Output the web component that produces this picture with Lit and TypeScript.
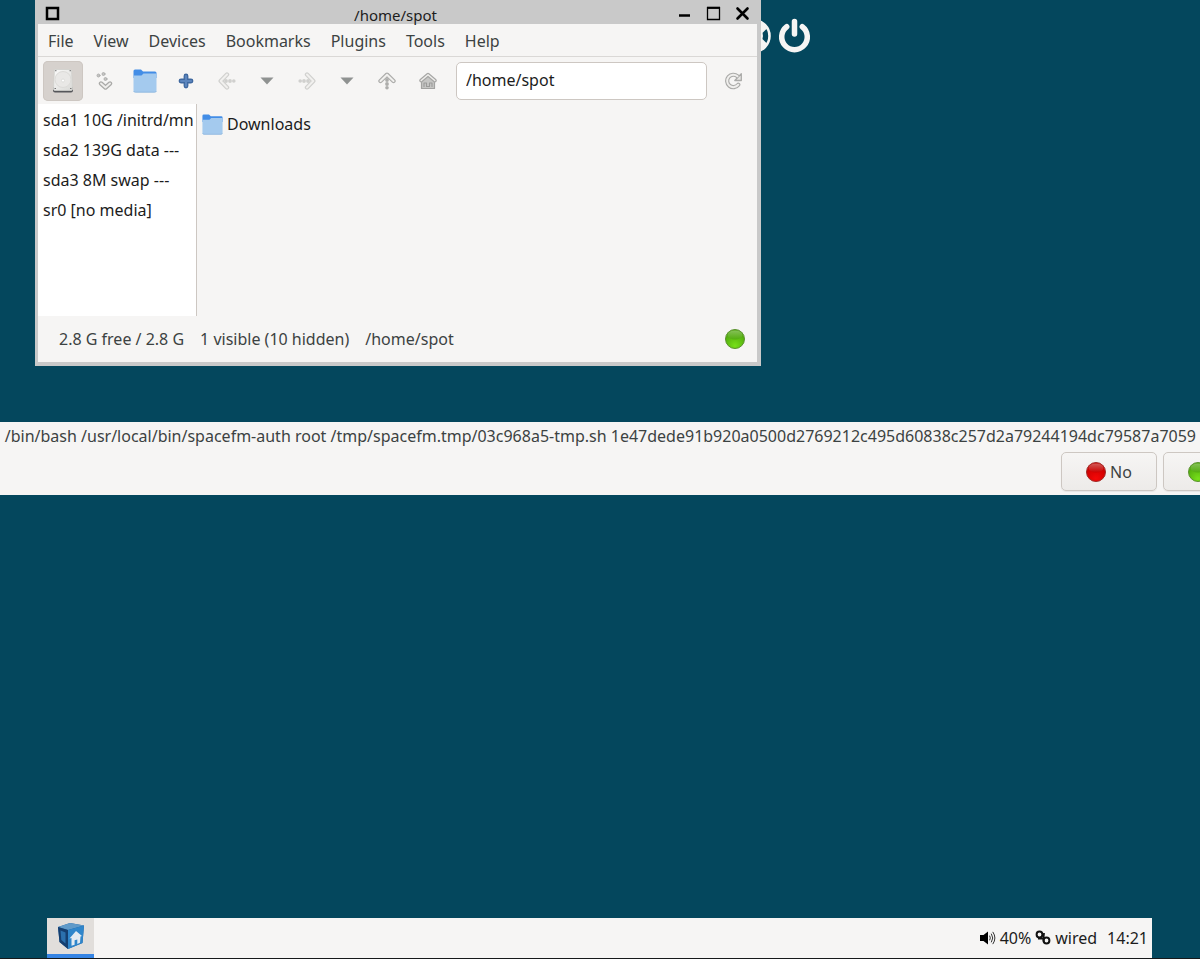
import { LitElement, html, css, svg } from "lit";
import { customElement, property } from "lit/decorators.js";

const drive = svg`<svg width="22" height="26" viewBox="0 0 22 26">
  <defs><linearGradient id="d" x1="0" y1="0" x2="1" y2="1"><stop offset="0" stop-color="#fbfbfa"/><stop offset="1" stop-color="#d9d9d6"/></linearGradient></defs>
  <path d="M1.500 19h19l.5 3.500q0 2-2 2H3q-2 0-2-2z" fill="#55565a"/>
  <path d="M3.500 1.500h15q1 0 1.100 1l.9 18.500q0 1.500-1.500 1.500H3q-1.500 0-1.500-1.500L2.400 2.500q.1-1 1.100-1z" fill="url(#d)" stroke="#cfcfcc" stroke-width=".8"/>
  <circle cx="11" cy="11.500" r="8" fill="#e9e8e6" stroke="#dcdbd8"/>
  <circle cx="11" cy="12.500" r="1.500" fill="#fff" stroke="#d2d1ce" stroke-width=".6"/>
  <path d="M3 2.700h1.500M17.500 2.700H19M2.500 20.500H4M18 20.500h1.500" stroke="#777" stroke-width="1"/>
</svg>`;

const folder = svg`<svg width="24" height="24" viewBox="0 0 24 24">
  <path d="M.5 9V2Q.5.500 2 .500h6L10 2.500h12q1.500 0 1.500 1.500V9z" fill="#438de6"/>
  <path d="M.5 6.500h8L10.500 4.500h13v17q0 1.500-1.500 1.500H2Q.5 23 .5 21.500z" fill="#a4caee"/>
  <path d="M.7 22q.3 1.200 1.500 1.200h19.600q1.200 0 1.500-1.200" fill="none" stroke="#8fb8e0"/>
</svg>`;

const plus = svg`<svg width="16" height="16" viewBox="0 0 16 16">
  <path d="M8 3v10M3 8h10" stroke="#3f689f" stroke-width="4.800" stroke-linecap="round"/>
  <path d="M8 3v10M3 8h10" stroke="#5c85bd" stroke-width="2.200" stroke-linecap="round"/>
</svg>`;

const tree = svg`<svg width="18" height="20" viewBox="0 0 18 20" fill="none" stroke-linecap="round" stroke-linejoin="round">
  <path d="M6 12.500l4.500 4 4.500-4" stroke="#a9a9a7" stroke-width="4.400"/>
  <path d="M6 12.500l4.500 4 4.500-4" stroke="#eeedeb" stroke-width="1.900"/>
  <g fill="#c4c4c2" stroke="#adadab" stroke-width=".9"><circle cx="3.500" cy="4.500" r="1.500"/><circle cx="8.500" cy="3" r="1.500"/><circle cx="10.500" cy="8" r="1.500"/></g>
</svg>`;

const arrow = (turn: number, dark: boolean) => {
  const edge = dark ? "#adadab" : "#d0d0ce";
  return svg`<svg width="18" height="18" viewBox="0 0 18 18" fill="none" stroke-linecap="round" stroke-linejoin="round">
  <g transform="rotate(${turn} 9 9)">
    <path d="M9 2.500L2.700 9 9 15.500" stroke="${edge}" stroke-width="4.400"/>
    <path d="M9 2.500L2.700 9 9 15.500" stroke="#f1f0ee" stroke-width="2"/>
    <g fill="${edge}"><circle cx="8" cy="9" r="1.900"/><circle cx="12" cy="9" r="1.900"/><circle cx="15.800" cy="9" r="1.800"/></g>
  </g></svg>`;
};

const caret = svg`<svg width="14" height="8" viewBox="0 0 14 8"><path d="M.5.5h13L7 7.500z" fill="#8f9291"/></svg>`;

const home = svg`<svg width="18" height="18" viewBox="0 0 18 18" fill="none" stroke-linejoin="round" stroke-linecap="round">
  <path d="M2.500 9v7.500h13V9L9 3.500z" fill="#c6c6c4" stroke="#a3a3a1" stroke-width="1.200"/>
  <path d="M2.200 8.500L9 2.800l6.800 5.700" stroke="#a6a6a4" stroke-width="3.800"/>
  <path d="M2.200 8.500L9 2.800l6.800 5.700" stroke="#efeeec" stroke-width="1.500"/>
  <path d="M5 14.500v-3.500h2.500v3.500h3v-3.500H13v3.500" stroke="#9b9b99" stroke-width="1.100"/>
</svg>`;

const reload = svg`<svg width="18" height="18" viewBox="0 0 18 18" fill="none" stroke-linejoin="round" stroke-linecap="round">
  <path d="M13.300 12.700A6.200 6.200 0 1 1 12.500 4.300" stroke="#aaaaa8" stroke-width="4.200"/>
  <path d="M16.300 1.800v6.700H9.800z" fill="#e8e7e5" stroke="#aaaaa8" stroke-width="1.300"/>
  <path d="M13.300 12.700A6.200 6.200 0 1 1 12.500 4.300" stroke="#f0efed" stroke-width="2"/>
</svg>`;

const houseCube = svg`<svg width="28" height="28" viewBox="0 0 28 28">
  <path d="M1 5L13 1l14 2.500L25.500 21 11 27 2.500 20z" fill="#1f5f9f"/>
  <path d="M1 5L13 1l14 2.500L11 8z" fill="#5f9ac9"/>
  <path d="M1 5l10 3v19l-8.500-7z" fill="#153f70"/>
  <path d="M11 8l16-4.500L25.500 21 11 27z" fill="#2f86cb"/>
  <path d="M3.500 8.500L8.500 10.500v11L4.300 18z" fill="#2b70ad"/>
  <path d="M12.500 16.500L19 9l6 5-1.500.6-.5 6.200-2.700 1.100v-4.400l-2.700.8v4.400l-3.100 1.100v-7.800z" fill="#e3ebf2"/>
</svg>`;

const speaker = svg`<svg width="16" height="14" viewBox="0 0 16 14" fill="none" stroke="#333" stroke-linecap="round">
  <path d="M0 4h3.500L8 .500v13L3.500 10H0z" fill="#000" stroke="none"/>
  <path d="M9.800 5q1.200 2 0 4M11.500 3q2.700 4 0 8M13 1.200q4 5.800 0 11.600" stroke-width="1"/>
</svg>`;

const chain = svg`<svg width="16" height="16" viewBox="0 0 16 16" fill="none" stroke="#111" stroke-width="2">
  <circle cx="4.500" cy="4.500" r="2.900"/><circle cx="11.500" cy="10.500" r="2.900"/><path d="M3 8.500L8.500 8.500 9 3M8.500 8.500v3" stroke-width="1.800"/>
</svg>`;

@customElement("status-light")
export class StatusLight extends LitElement {
  @property() tone = "green";
  static styles = css`
    :host { display: block; flex: none; width: 20px; height: 20px; }
    svg { display: block; }
  `;
  render() {
    const [top, mid, low, edge] = this.tone === "red"
      ? ["#d4706c", "#c80000", "#f50808", "#a02c28"]
      : ["#93c76a", "#4fa80c", "#77e01a", "#5b9130"];
    return html`<svg width="20" height="20" viewBox="0 0 20 20" aria-hidden="true">
      <defs>
        <radialGradient id="b" cx=".5" cy=".85" r=".7"><stop offset="0" stop-color=${low}></stop><stop offset="1" stop-color=${mid}></stop></radialGradient>
        <linearGradient id="t" x1="0" y1="0" x2="0" y2="1"><stop offset="0" stop-color=${top}></stop><stop offset="1" stop-color=${mid}></stop></linearGradient>
      </defs>
      <circle cx="10" cy="10" r="9.500" fill="url(#b)" stroke=${edge}></circle>
      <ellipse cx="10" cy="6" rx="7.500" ry="4.500" fill="url(#t)" opacity=".8"></ellipse>
    </svg>`;
  }
}

@customElement("file-manager")
export class FileManager extends LitElement {
  static styles = css`
    :host { display: block; box-sizing: border-box; border: solid #c9c9c9; border-width: 0 4px 4px 3px; background: #f6f5f4; color: #3c4242; }
    button, input { font: inherit; color: inherit; border: 0; margin: 0; padding: 0; background: none; }
    svg { display: block; flex: none; }
    .title { display: flex; align-items: center; height: 24px; background: #c9c9c9; padding: 0 7px; color: #1c1c1c; gap: 14px; }
    .title h1 { flex: 1; margin: 0; padding: 5px 0 0 54px; font-size: 15px; line-height: 20px; font-weight: 400; text-align: center; }
    .title button { width: 15px; height: 15px; margin-top: 3px; }
    .menu { box-sizing: border-box; display: flex; height: 33px; align-items: center; border-bottom: 1px solid #dad8d6; padding: 2px 0 0 10px; gap: 20px; }
    .tools { display: flex; align-items: center; height: 47px; padding: 0 3px 0 5px; gap: 1px; }
    .tool { display: flex; flex: none; align-items: center; justify-content: center; width: 40px; height: 40px; border-radius: 5px; }
    .drop { width: 38px; }
    .on { background: #d6d1cd; box-shadow: inset 0 0 0 1px #cdc7c2; }
    .path { flex: 1; min-width: 0; box-sizing: border-box; height: 38px; margin: 0 6px 0 7px; border: 1px solid #cdc7c2; border-radius: 5px; background: #fff; color: #1c1c1c; padding: 0 9px 2px; }
    .body { display: flex; height: 212px; color: #1c1c1c; }
    .side { box-sizing: border-box; width: 159px; margin: 0; padding: 1px 0 0 5px; list-style: none; background: #fff; border-right: 1px solid #cdc7c2; overflow: hidden; white-space: nowrap; }
    .side li { height: 30px; line-height: 30px; }
    .files { flex: 1; margin: 0; padding: 7px 5px; list-style: none; }
    .files li { display: flex; align-items: center; gap: 4px; line-height: 26px; }
    .files svg { width: 21px; height: 21px; }
    .status { display: flex; align-items: center; height: 46px; padding: 0 12px 0 21px; gap: 16px; }
    .status status-light { margin-left: auto; }
  `;
  menus = ["File", "View", "Devices", "Bookmarks", "Plugins", "Tools", "Help"];
  devices = ["sda1 10G /initrd/mn", "sda2 139G data ---", "sda3 8M swap ---", "sr0 [no media]"];
  tools = [
    { name: "Devices", icon: drive, cls: "tool on" },
    { name: "Tree", icon: tree, cls: "tool" },
    { name: "New folder", icon: folder, cls: "tool" },
    { name: "New tab", icon: plus, cls: "tool" },
    { name: "Back", icon: arrow(0, false), cls: "tool" },
    { name: "Back history", icon: caret, cls: "tool drop" },
    { name: "Forward", icon: arrow(180, false), cls: "tool" },
    { name: "Forward history", icon: caret, cls: "tool drop" },
    { name: "Up", icon: arrow(90, true), cls: "tool" },
    { name: "Home", icon: home, cls: "tool" },
  ];
  render() {
    return html`
      <header class="title">
        <button aria-label="Window menu"><svg width="15" height="15" viewBox="0 0 15 15"><rect x="2" y="2" width="11" height="11" fill="none" stroke="#000" stroke-width="2.500"></rect></svg></button>
        <h1>/home/spot</h1>
        <button aria-label="Minimize"><svg width="15" height="15" viewBox="0 0 15 15"><path d="M2 9.500h11" stroke="#000" stroke-width="2.500"></path></svg></button>
        <button aria-label="Maximize"><svg width="15" height="15" viewBox="0 0 15 15"><path d="M1.500 1v12.500h12V1M1 2h13" fill="none" stroke="#000" stroke-width="1.300"></path><path d="M1 1.700h13" stroke="#000" stroke-width="2"></path></svg></button>
        <button aria-label="Close"><svg width="15" height="15" viewBox="0 0 15 15"><path d="M2.500 2.500l10 10M12.500 2.500l-10 10" stroke="#000" stroke-width="2.600" stroke-linecap="round"></path></svg></button>
      </header>
      <nav class="menu">${this.menus.map((m) => html`<button>${m}</button>`)}</nav>
      <div class="tools">
        ${this.tools.map((t) => html`<button class=${t.cls} aria-label=${t.name}>${t.icon}</button>`)}
        <input class="path" aria-label="Path" .value=${"/home/spot"} />
        <button class="tool" aria-label="Reload">${reload}</button>
      </div>
      <div class="body">
        <ul class="side">${this.devices.map((d) => html`<li>${d}</li>`)}</ul>
        <ul class="files"><li>${folder}<span>Downloads</span></li></ul>
      </div>
      <footer class="status">
        <span>2.8 G free / 2.8 G</span><span>1 visible (10 hidden)</span><span>/home/spot</span>
        <status-light></status-light>
      </footer>`;
  }
}

@customElement("app-root")
export class AppRoot extends LitElement {
  static styles = css`
    :host { display: block; position: relative; box-sizing: border-box; height: 100vh; overflow: hidden; background: #04475d; border-bottom: 1px solid #16191a; font: 16px/22px "Noto Sans", sans-serif; color: #3c4242; }
    svg { display: block; flex: none; }
    .launchers { position: absolute; top: 18px; left: 737px; display: flex; gap: 6px; }
    .launchers button { border: 0; padding: 0; background: none; }
    .window { position: absolute; top: 0; left: 35px; width: 726px; }
    .dialog { position: absolute; top: 422px; left: 0; right: -64px; background: #f6f5f4; }
    .dialog p { margin: 0; padding: 3px 68px 5px 0; display: flex; justify-content: flex-end; white-space: nowrap; }
    .answers { display: flex; justify-content: flex-end; gap: 6px; padding: 0 5px 4px 0; }
    .answers button { display: flex; align-items: center; gap: 4px; box-sizing: border-box; width: 96px; height: 39px; padding: 0 0 0 24px; font: inherit; color: inherit; border: 1px solid #cdc7c2; border-radius: 5px; background: linear-gradient(#f6f5f4, #edebe9); box-shadow: 0 1px 1px #0001; }
    .bar { position: absolute; left: 47px; right: 48px; bottom: 0; display: flex; justify-content: space-between; height: 40px; background: #f6f5f4; color: #1c1c1c; }
    .task { display: flex; justify-content: center; align-items: center; width: 47px; padding: 0; border: 0; border-bottom: 4px solid #3584e4; background: #e1dedb; }
    .tray { display: flex; align-items: center; gap: 4px; padding-right: 4px; }
    .tray time { margin-left: 6px; }
  `;
  render() {
    return html`
      <div class="launchers">
        <button aria-label="Help"><svg width="34" height="36" viewBox="0 0 34 36" fill="none" stroke="#f6f5f4"><circle cx="17" cy="18" r="15.500" stroke-width="2.600"></circle><circle cx="17" cy="18" r="7.500" stroke-width="3"></circle><path d="M22 12l5-5M22 24l5 5M12 12L7 7M12 24l-5 5" stroke-width="9"></path></svg></button>
        <button aria-label="Power"><svg width="34" height="36" viewBox="0 0 34 36" fill="none" stroke="#f6f5f4" stroke-width="5.500" stroke-linecap="round"><path d="M9.700 8.700a12.800 12.800 0 1 0 15.600 0M17.500 3.500v12.500"></path></svg></button>
      </div>
      <file-manager class="window"></file-manager>
      <section class="dialog" role="dialog" aria-label="Confirm">
        <p>/bin/bash /usr/local/bin/spacefm-auth root /tmp/spacefm.tmp/03c968a5-tmp.sh 1e47dede91b920a0500d2769212c495d60838c257d2a79244194dc79587a7059</p>
        <div class="answers">
          <button><status-light tone="red"></status-light>No</button>
          <button aria-label="Yes"><status-light></status-light></button>
        </div>
      </section>
      <footer class="bar">
        <button class="task" aria-label="File manager">${houseCube}</button>
        <div class="tray">${speaker}<span>40%</span>${chain}<span>wired</span><time>14:21</time></div>
      </footer>`;
  }
}
